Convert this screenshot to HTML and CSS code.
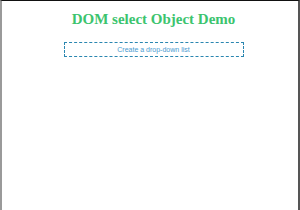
FILE: index.html
```html
<!DOCTYPE html>
<html>
<head>
<meta charset="utf-8">
<link rel="stylesheet" href="styles.css">
</head>
<body>
<div class="frame">
  <h1 class="title">DOM select Object Demo</h1>
  <div class="box">Create a drop-down list</div>
</div>
</body>
</html>
```
FILE: styles.css
```css
html, body {
  margin: 0;
  padding: 0;
  background: #fff;
}
.frame {
  box-sizing: border-box;
  width: 300px;
  height: 210px;
  border-top: 1px solid #111;
  border-left: 2px solid #9a9a9a;
  border-right: 2px solid #555;
  padding-top: 9px;
  padding-left: 7px;
  display: flex;
  flex-direction: column;
  align-items: center;
}
.title {
  margin: 0;
  font-family: "Liberation Serif", serif;
  font-weight: bold;
  font-size: 15px;
  line-height: 18px;
  color: #3cc46e;
}
.box {
  margin-top: 14px;
  width: 178px;
  height: 13px;
  border: 1px dashed #2a86b0;
  font-family: "Liberation Sans", sans-serif;
  font-size: 7px;
  line-height: 13px;
  text-align: center;
  color: #4a9ad0;
}
```
